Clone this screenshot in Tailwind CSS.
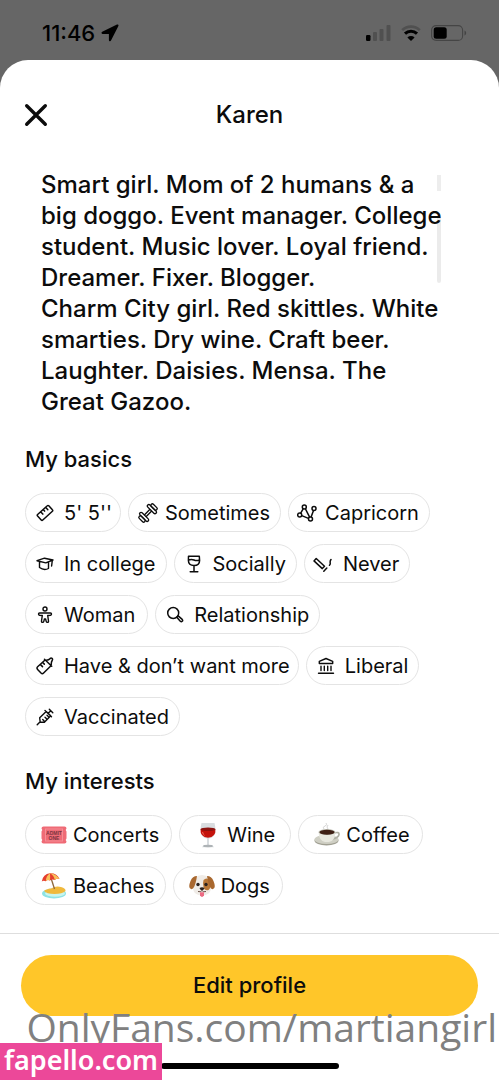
<!DOCTYPE html>
<html lang="en">
<head>
<meta charset="utf-8">
<meta name="viewport" content="width=device-width, initial-scale=1">
<title>Karen</title>
<script src="https://cdn.jsdelivr.net/npm/@tailwindcss/browser@4"></script>
</head>
<body class="relative flex min-h-screen flex-col overflow-x-hidden bg-[#666666] font-['Inter',sans-serif] text-[#0c0c0c]">
<!-- Status bar -->
<header class="flex h-15 items-center justify-between pt-1.5 pr-8 pl-10.5">
  <div class="flex items-center gap-1.5 text-black">
    <span class="text-[22px] leading-6 font-medium">11:46</span>
    <svg class="size-4.5" viewBox="0 0 18 18" fill="currentColor" aria-hidden="true"><path d="M16 .6 1.200 7.700c-1.100.6-.8 2.200.5 2.200h6.200v6.200c0 1.300 1.600 1.700 2.100.5L17.400 1.900c.4-1-.4-1.700-1.400-1.300Z"/></svg>
  </div>
  <div class="flex items-center gap-2.5">
    <svg class="h-4 w-[26px]" viewBox="0 0 26 16" aria-hidden="true"><rect x="1" y="10" width="4.500" height="6" rx="1.200" fill="#000"/><g fill="#505050"><rect x="8" y="7" width="4" height="9" rx="1"/><rect x="14.500" y="4" width="4" height="12" rx="1"/><rect x="21.500" y="0" width="4" height="16" rx="1"/></g></svg>
    <svg class="h-4 w-5" viewBox="0 0 20 16" fill="none" aria-hidden="true"><path d="M1.200 5.200a12.500 12.500 0 0 1 17.600 0" stroke="#505050" stroke-width="2.600"/><path d="M4 8.600a8.600 8.600 0 0 1 12 0" stroke="#000" stroke-width="3"/><path d="M10 16 6.400 12.500a5.200 5.200 0 0 1 7.200 0Z" fill="#000"/></svg>
    <svg class="h-4 w-9" viewBox="0 0 36 16" aria-hidden="true"><rect x=".6" y=".6" width="31" height="14.800" rx="4.500" fill="none" stroke="#454545" stroke-width="1.100"/><rect x="2.700" y="2.300" width="13" height="11.400" rx="2.500" fill="#000"/><path d="M33.500 5.500c2.200.8 2.200 4.200 0 5Z" fill="#454545"/></svg>
  </div>
</header>

<main class="flex grow flex-col rounded-t-[28px] bg-white">
  <div class="grid h-[109px] grid-cols-[48px_1fr_48px] items-center px-3">
    <button type="button" aria-label="Close" class="flex size-12 items-center justify-center"><svg class="size-6" viewBox="0 0 24 24" fill="none" stroke="currentColor" stroke-width="3.400" stroke-linecap="round" aria-hidden="true"><path d="m2.700 2.700 18.600 18.600M21.300 2.700 2.700 21.300"/></svg></button>
    <h1 class="text-center text-[24px] leading-8 font-medium">Karen</h1>
  </div>

  <section class="relative px-[41px]">
    <p class="text-[24px] leading-[31px] font-medium whitespace-nowrap">Smart girl. Mom of 2 humans &amp; a<br>big doggo. Event manager. College<br>student. Music lover. Loyal friend.<br>Dreamer. Fixer. Blogger.<br>Charm City girl. Red skittles. White<br>smarties. Dry wine. Craft beer.<br>Laughter. Daisies. Mensa. The<br>Great Gazoo.</p>
    <div class="absolute top-1.5 right-[58px] h-4 w-1 bg-[#ededed]"></div>
    <div class="absolute top-12 right-[58px] h-[66px] w-1 rounded-b-full bg-[#000000]/8"></div>
  </section>

  <section class="px-[25px] pt-[26px]">
    <h2 class="text-[22px] leading-8 font-medium">My basics</h2>
    <ul class="flex flex-wrap gap-x-[7px] gap-y-3 pt-4.5 text-xl">
      <li class="flex h-[39px] items-center gap-2.5 rounded-full border border-[#e4e4e4] pr-2 pl-2.5">
        <svg class="size-4.5" viewBox="0 0 18 18" fill="none" stroke="currentColor" stroke-width="1.500" stroke-linecap="round" stroke-linejoin="round" aria-hidden="true"><path d="M11.300 1.800 1.600 10.500q-.8.700 0 1.500l3.600 4q.8.800 1.600 0l9.600-8.700q.8-.7 0-1.500l-3.600-4q-.8-.7-1.500 0ZM4.800 7.900l2 2.200M7.300 5.700l1.300 1.400M9.800 3.400l2 2.300"/></svg>5' 5''</li>
      <li class="flex h-[39px] items-center gap-2 rounded-full border border-[#e4e4e4] px-2.5">
        <svg class="size-4.5 overflow-visible" viewBox="0 0 18 18" fill="none" stroke="currentColor" stroke-width="1.300" stroke-linejoin="round" aria-hidden="true"><g transform="rotate(-45 9 9)"><rect x="2" y="3.200" width="3" height="11.600" rx="1.500"/><rect x="13" y="3.200" width="3" height="11.600" rx="1.500"/><rect x="-1" y="5.200" width="3" height="7.600" rx="1.400"/><rect x="16" y="5.200" width="3" height="7.600" rx="1.400"/><path d="M5 7.800h8M5 10.200h8"/></g></svg>Sometimes</li>
      <li class="flex h-[39px] items-center gap-2 rounded-full border border-[#e4e4e4] pr-2.5 pl-2">
        <svg class="h-4.5 w-5" viewBox="0 0 20 18" fill="none" stroke="currentColor" stroke-width="1.500" aria-hidden="true"><circle cx="2.700" cy="11" r="2"/><circle cx="7.300" cy="2.900" r="2"/><circle cx="13.500" cy="15" r="2"/><circle cx="17" cy="4.500" r="2"/><path d="M3.700 9.200 6.300 4.700M8.300 4.700l4.300 8.500M4.700 11.600l6.800 2.800M16.500 6.500l-2.400 6.500"/></svg>Capricorn</li>
      <li class="flex h-[39px] items-center gap-2.5 rounded-full border border-[#e4e4e4] px-2.5">
        <svg class="size-4.5" viewBox="0 0 18 18" fill="none" stroke="currentColor" stroke-width="1.400" stroke-linecap="round" stroke-linejoin="round" aria-hidden="true"><path d="M1 5.700 8.500 3.200 17 5 9.800 7.900ZM3.500 7v5.500q4.500 3.300 9 1V7M16.300 5.500l-.7 5.500"/></svg>In college</li>
      <li class="flex h-[39px] items-center gap-2.5 rounded-full border border-[#e4e4e4] px-2.5">
        <svg class="size-4.5" viewBox="0 0 18 18" fill="none" stroke="currentColor" stroke-width="1.500" stroke-linecap="round" stroke-linejoin="round" aria-hidden="true"><path d="M3.500 1.200h10.800l.3 4.300q0 5-5.600 5t-5.600-5ZM3.500 5q3-1.200 5.500 0t5.400 0M9 10.500v6M5.200 16.800h7.600"/></svg>Socially</li>
      <li class="flex h-[39px] items-center gap-2.5 rounded-full border border-[#e4e4e4] pr-2.5 pl-2">
        <svg class="h-4.5 w-5" viewBox="0 0 20 18" fill="none" stroke="currentColor" stroke-width="1.500" stroke-linecap="round" stroke-linejoin="round" aria-hidden="true"><path d="m3.200 3.500 8.300 7.700-2.200 2.400L1 5.900ZM10.800 16.300l3-3.200M16.500 10.300c2-1.700-.7-3.200 1.500-5.800"/></svg>Never</li>
      <li class="flex h-[39px] items-center gap-2.5 rounded-full border border-[#e4e4e4] pr-3 pl-2.5">
        <svg class="size-4.5" viewBox="0 0 18 18" fill="none" stroke="currentColor" stroke-width="1.400" stroke-linejoin="round" aria-hidden="true"><circle cx="9" cy="3" r="2"/><path d="M3.500 7h11q1 0 1 1t-1 1.200l-2.800.3.800 5.500q.1 1.400-1 1.400t-1.300-1L9.600 13H8.400l-.6 2.400q-.2 1-1.300 1T5.500 15l.8-5.500-2.800-.3q-1-.2-1-1.200t1-1Z"/></svg>Woman</li>
      <li class="flex h-[39px] items-center gap-2.5 rounded-full border border-[#e4e4e4] px-2.5">
        <svg class="size-4.5" viewBox="0 0 18 18" fill="none" stroke="currentColor" stroke-width="1.500" stroke-linejoin="round" aria-hidden="true"><circle cx="7.200" cy="7" r="5.500"/><path d="m10.800 11.300 1.400-1.400 4 3.500q.9 1 0 1.900t-1.900 0Z"/></svg>Relationship</li>
      <li class="flex h-[39px] items-center gap-2.5 rounded-full border border-[#e4e4e4] pr-2 pl-2.5">
        <svg class="size-4.5" viewBox="0 0 18 18" fill="none" stroke="currentColor" stroke-width="1.500" stroke-linecap="round" stroke-linejoin="round" aria-hidden="true"><path d="M8.800 3.200 1.600 9.800q-1.300 1.300 0 2.600L5 16q1.300 1.300 2.600 0l7.400-7.200M8.500 2.300l7.200 7M10.300 3.200q2.500-.2 4-1.800.8-.8 1.700 0t.3 1.800q-1.200 1.700-1 4.300M4.500 7.600l2 2M6.800 5.600l1.500 1.500"/></svg>Have &amp; don’t want more</li>
      <li class="flex h-[39px] items-center gap-2.5 rounded-full border border-[#e4e4e4] px-2.5">
        <svg class="size-4.5" viewBox="0 0 18 18" fill="none" stroke="currentColor" stroke-width="1.400" stroke-linecap="round" stroke-linejoin="round" aria-hidden="true"><path d="M2.300 6.500V4.300L9 1.500l6.700 2.800v2.200ZM4 9.300v4.200M7.300 9.300v4.200M10.700 9.300v4.200M14 9.300v4.200M1.500 16.300h15"/></svg>Liberal</li>
      <li class="flex h-[39px] items-center gap-2.5 rounded-full border border-[#e4e4e4] px-2.5">
        <svg class="size-4.5" viewBox="0 0 18 18" fill="none" stroke="currentColor" stroke-width="1.400" stroke-linecap="round" stroke-linejoin="round" aria-hidden="true"><path d="m1.200 16.800 3-3M3.700 9.800l6.500-6.300 4.500 4.300-6.300 6.400H4.200ZM9 2.500l6.500 6.200M12.200 5.300l2.600-2.600M13.300 1.200l3.500 3.500M6.700 11.500l1.300 1.300M9 9.300l1.300 1.300M11 7.200l1.300 1.300"/></svg>Vaccinated</li>
    </ul>
  </section>

  <section class="px-[25px] pt-[29px]">
    <h2 class="text-[22px] leading-8 font-medium">My interests</h2>
    <ul class="flex flex-wrap gap-x-[7px] gap-y-3 pt-4.5 text-xl">
      <li class="flex h-[39px] items-center gap-1.5 rounded-full border border-[#e4e4e4] pr-3 pl-[15px]">
        <svg class="h-6 w-[26px]" viewBox="0 0 26 24" aria-hidden="true"><path d="M2.500 3.500h21q2 0 2 2-1.600 1.500 0 3v7q-1.600 1.500 0 3 0 2-2 2h-21q-2 0-2-2 1.600-1.500 0-3v-7q1.600-1.500 0-3 0-2 2-2Z" fill="#ef6b76"/><rect x="4.500" y="6" width="17" height="12" fill="none" stroke="#f58e96"/><g font-family="Liberation Sans" font-weight="700" font-size="5" text-anchor="middle" fill="#7b3440"><text x="13" y="11.500">ADMIT</text><text x="13" y="16.500">ONE</text></g></svg>Concerts</li>
      <li class="flex h-[39px] items-center gap-1.5 rounded-full border border-[#e4e4e4] px-[15px]">
        <svg class="h-[26px] w-[26px]" viewBox="0 0 26 26" aria-hidden="true"><path d="M6.500 1h13q3.500 14-5.500 15.500V23q4.500.5 5 2.300H7q.5-1.800 5-2.300v-6.500Q3 15 6.500 1Z" fill="#d9dde0"/><path d="M5.600 7h14.800q.7 8-7.400 8.700Q4.900 15 5.600 7Z" fill="#c5130c"/><ellipse cx="13" cy="7.200" rx="7.400" ry="1.700" fill="#8d1310"/><path d="M7.500 10q.5 2.500 2 3.300" stroke="#f36a57" fill="none"/><ellipse cx="13" cy="24" rx="5" ry="1.200" fill="#aeb3b6"/></svg>Wine</li>
      <li class="flex h-[39px] items-center gap-1.5 rounded-full border border-[#e4e4e4] pr-3 pl-[15px]">
        <svg class="h-6 w-[26px]" viewBox="0 0 26 24" aria-hidden="true"><path d="M10 6q-2-2 1-3t1-3M14 6q-2-2 0-4" stroke="#d5d5d5" fill="none"/><ellipse cx="12.500" cy="17.500" rx="12" ry="5" fill="#a09f92"/><ellipse cx="12.500" cy="16.500" rx="12" ry="4.600" fill="#cfcfc4"/><path d="M20 10q5.500-1.500 5 1.500t-6 4.500" fill="none" stroke="#b0b0a4" stroke-width="1.600"/><path d="M4.500 9h17q-.5 9-6.500 10h-4Q5 18 4.500 9Z" fill="#e8e8df"/><ellipse cx="13" cy="9" rx="8.500" ry="3" fill="#bdbdb2"/><ellipse cx="13" cy="9.300" rx="7.500" ry="2.500" fill="#3f2015"/></svg>Coffee</li>
      <li class="flex h-[39px] items-center gap-1.5 rounded-full border border-[#e4e4e4] pr-2.5 pl-[15px]">
        <svg class="h-[26px] w-[26px]" viewBox="0 0 26 26" aria-hidden="true"><ellipse cx="13" cy="20.500" rx="12" ry="5" fill="#8ee3e5"/><ellipse cx="14" cy="20.500" rx="10" ry="3.300" fill="#c9f5ee"/><path d="M3 18q2-2 7-2.500 5-3 10-1.500t4.500 4q-3 3-11 3T3 18Z" fill="#f0b93c"/><path d="m10 5 3.500 11" stroke="#8f6a3e" stroke-width="1.300"/><path d="M.8 8.500Q2 1 9 .3q7-.3 9.500 5.700-3-.6-4.800 1-2.700-1.200-4.700.6-2.500-1.200-4.200.6-2.500-.8-4 .3Z" fill="#e53e2e"/><path d="M4.800 8.200Q5 3 9 .3q.3 3.500 0 7.300-2.500-1.200-4.200.6ZM13.700 7Q13 2.500 9 .3q6 .7 9.500 5.700-3-.6-4.800 1Z" fill="#f8c05a"/></svg>Beaches</li>
      <li class="flex h-[39px] items-center gap-1.5 rounded-full border border-[#e4e4e4] pr-3 pl-[15px]">
        <svg class="h-[26px] w-[26px]" viewBox="0 0 26 26" aria-hidden="true"><path d="M6 5Q9 2 13 2t7 3q3 6 2 11-1 6-9 6.500Q5 22 4 16 3 11 6 5Z" fill="#f0ece7"/><path d="M14.500 7q4-4 6 2t-1 8q-4 1-5-3t0-7Z" fill="#b97736"/><path d="M8 3Q3.500 3 1.500 8T.7 15q2 2.500 4-.5T8 3ZM18 3q4.500 0 6.500 5t.8 7q-2 2.500-4-.5T18 3Z" fill="#a9682f"/><circle cx="9" cy="11.500" r="1.700" fill="#2b211d"/><circle cx="17" cy="11.500" r="1.700" fill="#2b211d"/><path d="M10.500 15q2.500-1.500 5 0-.7 2.200-2.500 2.500-1.800-.3-2.500-2.500Z" fill="#2b211d"/><path d="M9 18.500q2.500 1 4-1 1.500 2 4 1" fill="none" stroke="#6a5148"/><path d="M11 19.200h4v3q-2 3.500-4 0Z" fill="#ec6b83"/></svg>Dogs</li>
    </ul>
  </section>

  <footer class="mt-auto border-t border-[#dedede] px-[21px] pt-[21px]">
    <button type="button" class="h-[61px] w-full rounded-full bg-[#ffc629] text-[22px] font-medium">Edit profile</button>
    <div class="mx-auto mt-[47px] mb-[11px] h-1.5 w-[178px] rounded-full bg-black"></div>
  </footer>
</main>

<!-- Watermarks laid over the page -->
<div class="absolute right-0.5 bottom-[26px] font-['Open_Sans',sans-serif] text-[39px] leading-[54px] font-normal whitespace-nowrap text-[#808080]">OnlyFans.com/martiangirl</div>
<div class="absolute bottom-0 left-0 flex h-[37px] w-[162px] items-center justify-center bg-[#ec4899] pb-1 font-['Noto_Sans',sans-serif] text-[27px] leading-8 font-semibold text-white">fapello.com</div>
</body>
</html>
